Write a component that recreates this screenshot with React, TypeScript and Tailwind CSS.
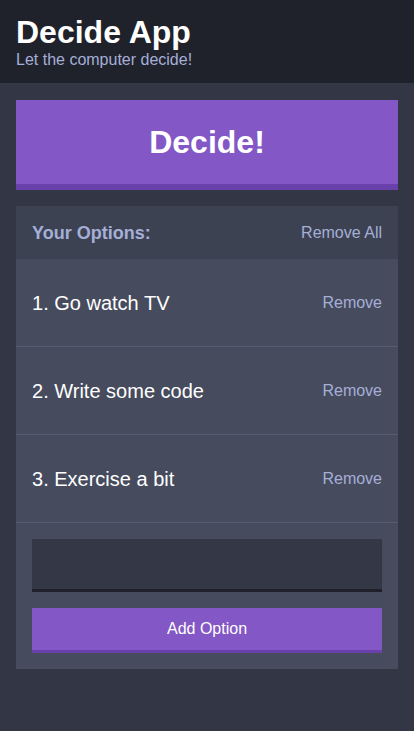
export default function App() {
  const options = ["Go watch TV", "Write some code", "Exercise a bit"];
  return (
    <div className="min-h-screen bg-[#333745] text-white" style={{ fontFamily: '"Liberation Sans", Arial, sans-serif' }}>
      <header className="bg-[#20222b] px-4 pt-[14px] pb-[14px]">
        <h1 className="m-0 text-[32px] font-bold leading-[1.15] text-white">Decide App</h1>
        <h2 className="m-0 text-[16px] font-normal leading-[1.15] text-[#a5afd7]">Let the computer decide!</h2>
      </header>
      <div className="px-4 pt-[17px] pb-4">
        <button className="block w-full bg-[#8357c5] border-b-[6px] border-[#6a41ab] text-white text-[32px] font-bold leading-[1.15] h-[90px] cursor-pointer">
          Decide!
        </button>
        <div className="mt-4 bg-[#464b5e]">
          <div className="flex items-center justify-between bg-[#3c4251] px-4 pt-[17px] pb-[15px]">
            <h3 className="m-0 text-[18px] font-bold leading-[1.15] text-[#a5afd7]">Your Options:</h3>
            <button className="text-[16px] leading-[1.15] text-[#a5afd7]">Remove All</button>
          </div>
          {options.map((o, i) => (
            <div key={o} className="flex items-center justify-between px-4 pt-[33px] pb-[31px] border-b border-[#575b70]">
              <p className="m-0 text-[20px] leading-[1.15] text-white">{i + 1}. {o}</p>
              <button className="text-[16px] leading-[1.15] text-[#a5afd7]">Remove</button>
            </div>
          ))}
          <form className="flex flex-col gap-4 p-4" onSubmit={(e) => e.preventDefault()}>
            <input className="block w-full h-[53px] bg-[#343746] border-b-[3px] border-[#1f2029] px-4 text-white text-[16px] outline-none" />
            <button className="block w-full h-[45px] bg-[#8357c5] border-b-[3px] border-[#6a41ab] text-white text-[16px] leading-[1.15]">
              Add Option
            </button>
          </form>
        </div>
      </div>
    </div>
  );
}
